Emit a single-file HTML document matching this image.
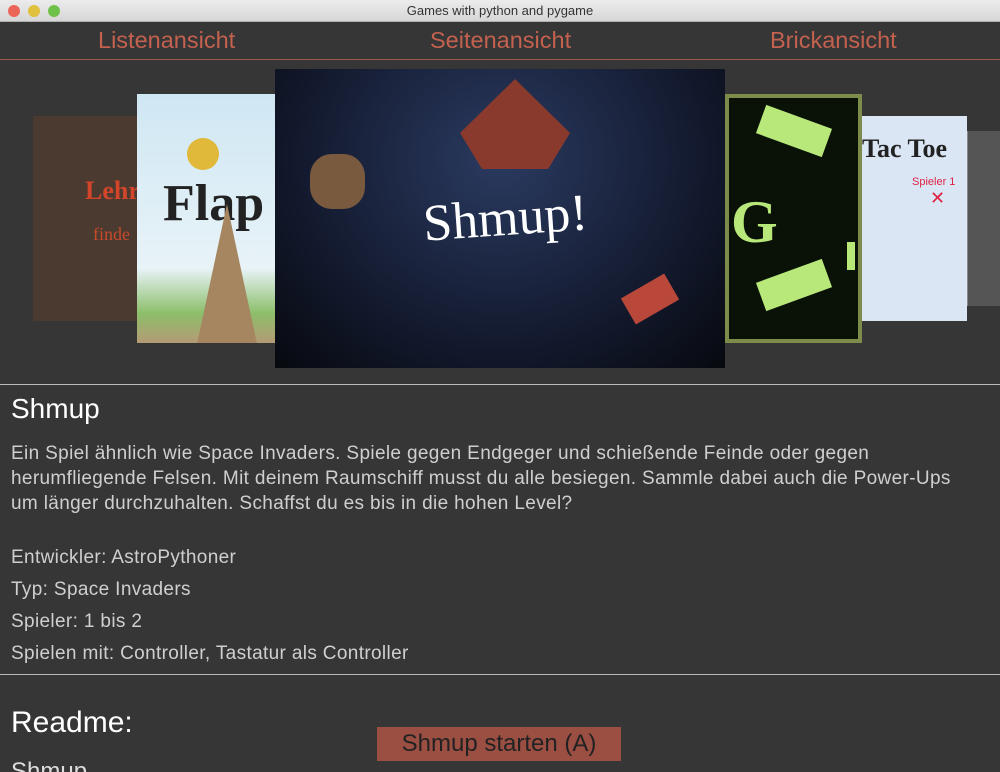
<!DOCTYPE html>
<html style="height:772px;overflow:hidden"><head><meta charset="utf-8"><style>
*{margin:0;padding:0;box-sizing:border-box}
body{width:1000px;height:772px;background:#363636;font-family:"Liberation Sans",sans-serif;overflow:hidden;position:relative;color:#ddd}
.tb{position:absolute;left:0;top:0;width:1000px;height:22px;background:linear-gradient(#ececec,#d6d6d6);border-bottom:1px solid #b0b0b0;text-align:center;font-size:13px;line-height:22px;color:#333}
.dot{position:absolute;top:5px;width:12px;height:12px;border-radius:50%}
.nav{position:absolute;top:27px;font-size:23.5px;color:#c4614f}
.abs{position:absolute}
p{font-size:19px;letter-spacing:0.35px;color:#cfcfcf;line-height:25px}
</style></head><body>
<div class="tb">Games with python and pygame
<div class="dot" style="left:8px;background:#ec6559"></div>
<div class="dot" style="left:28px;background:#e0c03d"></div>
<div class="dot" style="left:48px;background:#70c14a"></div></div>
<div class="nav" style="left:98px">Listenansicht</div>
<div class="nav" style="left:430px">Seitenansicht</div>
<div class="nav" style="left:770px">Brickansicht</div>
<div class="abs" style="left:0;top:59px;width:1000px;height:1px;background:#9c5a4e"></div>

<div class="abs" style="left:33px;top:116px;width:110px;height:205px;background:#4a3a30;overflow:hidden">
<div class="abs" style="left:52px;top:60px;font:bold 26px 'Liberation Serif',serif;color:#d2452a">Lehre</div>
<div class="abs" style="left:60px;top:108px;font:18px 'Liberation Serif',serif;color:#c84a2a">finde</div></div>
<div class="abs" style="left:967px;top:131px;width:33px;height:175px;background:#555;border-left:1px solid #888"></div>
<div class="abs" style="left:862px;top:116px;width:105px;height:205px;background:#dbe6f5;overflow:hidden">
<div class="abs" style="left:0;top:18px;font:bold 26px 'Liberation Serif',serif;color:#222">Tac Toe</div>
<div class="abs" style="left:50px;top:60px;font-size:11px;color:#d24">Spieler 1</div>
<div class="abs" style="left:68px;top:72px;font-size:18px;color:#d24">✕</div></div>
<div class="abs" style="left:137px;top:94px;width:140px;height:249px;background:linear-gradient(#cfe7f3,#e8f3f8 70%,#8cbf6a 88%,#b49a74);overflow:hidden">
<div class="abs" style="left:50px;top:44px;width:32px;height:32px;border-radius:50%;background:#e0b93a"></div>
<div class="abs" style="left:26px;top:80px;font:bold 52px 'Liberation Serif',serif;color:#222">Flap</div>
<div class="abs" style="left:60px;top:110px;width:0;height:0;border-left:30px solid transparent;border-right:30px solid transparent;border-bottom:140px solid #a58660"></div></div>
<div class="abs" style="left:725px;top:94px;width:137px;height:249px;background:#0a1208;border:4px solid #7d8c4a;overflow:hidden">
<div class="abs" style="left:30px;top:18px;width:70px;height:30px;background:#b8e87a;transform:rotate(20deg)"></div>
<div class="abs" style="left:30px;top:172px;width:70px;height:30px;background:#b8e87a;transform:rotate(-20deg)"></div>
<div class="abs" style="left:2px;top:90px;font:bold 60px 'Liberation Serif',serif;color:#b8e87a">G</div>
<div class="abs" style="left:118px;top:144px;width:8px;height:28px;background:#b8e87a"></div></div>
<div class="abs" style="left:275px;top:69px;width:450px;height:299px;background:radial-gradient(ellipse at 50% 30%,#2a3a60,#141b30 60%,#07090f);overflow:hidden">
<div class="abs" style="left:185px;top:10px;width:110px;height:90px;background:#8a3a2c;clip-path:polygon(50% 0,100% 60%,80% 100%,20% 100%,0 60%)"></div>
<div class="abs" style="left:35px;top:85px;width:55px;height:55px;border-radius:40%;background:#7a5a3e"></div>
<div class="abs" style="left:148px;top:120px;font:52px 'Liberation Serif',serif;color:#fff;transform:rotate(-4deg)">Shmup!</div>
<div class="abs" style="left:350px;top:215px;width:50px;height:30px;background:#b9473a;transform:rotate(-30deg)"></div></div>

<div class="abs" style="left:0;top:384px;width:1000px;height:1px;background:#bbb"></div>
<div class="abs" style="left:11px;top:393px;font-size:28px;color:#fff">Shmup</div>
<p class="abs" style="left:11px;top:441px;width:960px">Ein Spiel ähnlich wie Space Invaders. Spiele gegen Endgeger und schießende Feinde oder gegen herumfliegende Felsen. Mit deinem Raumschiff musst du alle besiegen. Sammle dabei auch die Power-Ups um länger durchzuhalten. Schaffst du es bis in die hohen Level?</p>
<p class="abs" style="left:11px;top:545px">Entwickler: AstroPythoner</p>
<p class="abs" style="left:11px;top:577px">Typ: Space Invaders</p>
<p class="abs" style="left:11px;top:609px">Spieler: 1 bis 2</p>
<p class="abs" style="left:11px;top:641px">Spielen mit: Controller, Tastatur als Controller</p>
<div class="abs" style="left:0;top:674px;width:1000px;height:1px;background:#bbb"></div>
<div class="abs" style="left:11px;top:706px;font-size:30px;color:#fff">Readme:</div>
<div class="abs" style="left:11px;top:758px;font-size:24px;color:#ddd">Shmup</div>
<div class="abs" style="left:377px;top:727px;width:244px;height:34px;background:#9b4e42;color:#222;font-size:24px;text-align:center;line-height:34px">Shmup starten (A)</div>
</body></html>
